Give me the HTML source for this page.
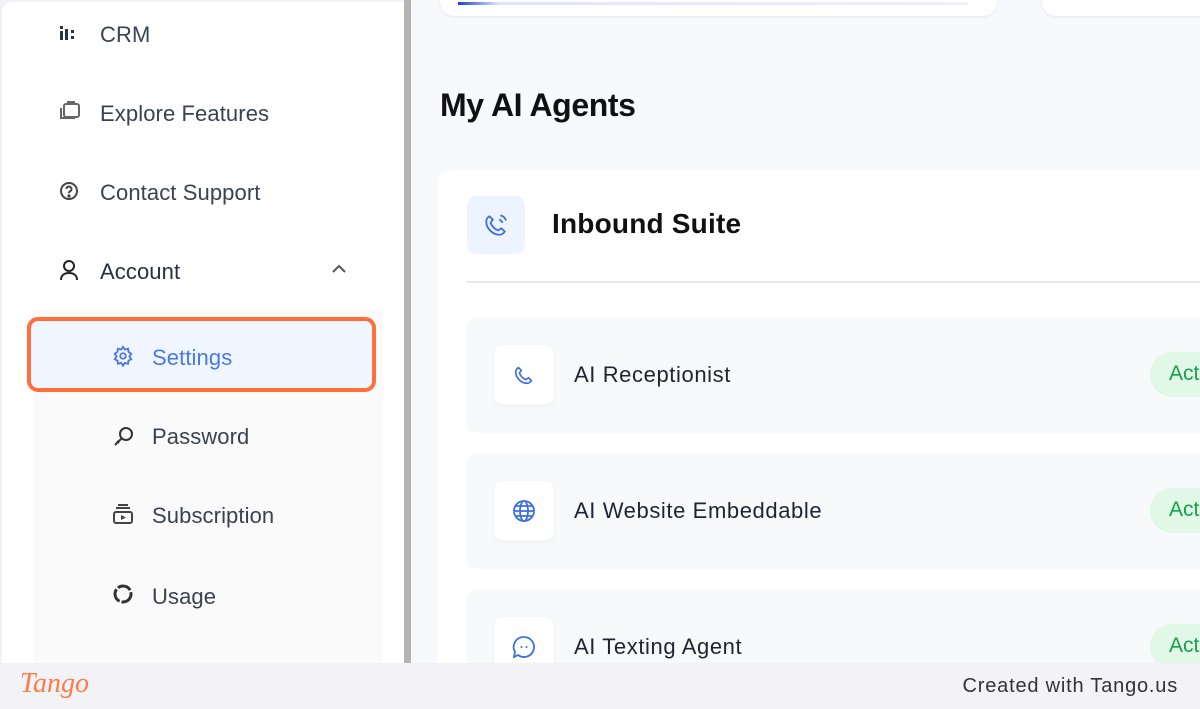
<!DOCTYPE html>
<html><head><meta charset="utf-8">
<style>
*{margin:0;padding:0;box-sizing:border-box}
body{width:1200px;height:709px;overflow:hidden;background:#f2f2f6;font-family:"Liberation Sans",Arial,sans-serif;position:relative}
.side{position:absolute;left:2px;top:2px;width:402px;height:661px;background:#fff;border-top-left-radius:10px}
.scroll{position:absolute;left:404px;top:0;width:7px;height:663px;background:#b4b4b4}
.main{position:absolute;left:411px;top:0;width:789px;height:663px;background:#f7f9fc;overflow:hidden}
.item{position:absolute;left:100px;font-size:22px;color:#3a4250;letter-spacing:0.1px}
.ic{position:absolute;left:58px}
.sub{position:absolute;left:33px;top:310px;width:350px;height:353px;background:#fafafa}
.hl{position:absolute;left:27px;top:317px;width:349px;height:75px;border:4px solid #ff6f3c;border-radius:11px;background:#eff6ff}
.sitem{position:absolute;left:152px;font-size:22px;color:#3a4250;letter-spacing:0.1px}
.sic{position:absolute;left:112px}
.footer{position:absolute;left:0;top:663px;width:1200px;height:46px;background:#f3f2f7}
.card{position:absolute;background:#fff;border-radius:14px}
.row{position:absolute;left:55px;width:760px;height:116px;background:#f8f9fb;border-radius:12px}
.ib{position:absolute;left:28px;top:28px;width:60px;height:60px;background:#fff;border-radius:10px;box-shadow:0 1px 3px rgba(0,0,0,.06)}
.rt{position:absolute;left:108px;top:45px;font-size:22px;color:#1e2430;letter-spacing:0.6px}
.badge{position:absolute;left:684px;top:35px;width:80px;height:45px;background:#e0f8e5;border-radius:23px;color:#16a34a;font-size:21px;padding:10px 0 0 19px}
</style></head><body>
<div class="side">
</div>
<div class="item" style="top:22px">CRM</div>
<svg class="ic" style="top:26px" width="22" height="14" viewBox="0 0 22 14"><g fill="#2a3140"><rect x="2" y="0" width="3" height="3"/><rect x="2" y="5" width="3" height="9"/><rect x="7" y="3" width="3" height="11"/><rect x="13" y="4" width="3" height="3"/><rect x="13" y="10" width="3" height="3"/></g></svg>
<div class="item" style="top:101px">Explore Features</div>
<svg class="ic" style="top:100px" width="24" height="22" viewBox="0 0 24 22"><g fill="none" stroke="#666" stroke-width="2"><rect x="6" y="4" width="15" height="13" rx="2"/><path d="M3 8v10h14"/><path d="M10 4V2h6v2"/></g></svg>
<div class="item" style="top:180px">Contact Support</div>
<svg class="ic" style="top:181px" width="22" height="22" viewBox="0 0 22 22"><g fill="none" stroke="#444" stroke-width="2"><circle cx="11" cy="10" r="8"/><path d="M8.5 8a2.5 2.5 0 1 1 3.5 2.3c-1 .5-1 1-1 2"/><circle cx="11" cy="15" r=".6" fill="#444"/></g></svg>
<div class="item" style="top:259px;color:#2a303b">Account</div>
<svg class="ic" style="top:259px" width="22" height="22" viewBox="0 0 22 22"><g fill="none" stroke="#222" stroke-width="2"><circle cx="11" cy="7" r="5"/><path d="M3 21c0-5 3.5-7 8-7s8 2 8 7"/></g></svg>
<svg style="position:absolute;left:331px;top:264px" width="16" height="10" viewBox="0 0 16 10"><path d="M2 8l6-6 6 6" fill="none" stroke="#555" stroke-width="2"/></svg>
<div class="sub"></div>
<div class="hl"></div>
<svg class="sic" style="top:345px" width="22" height="22" viewBox="0 0 24 24"><g fill="none" stroke="#4a78e6" stroke-width="2"><circle cx="12" cy="12" r="3"/><path d="M12 2l2 3 3.5-1 .5 3.5 3 2-2 3 2 3-3 1.5-.5 3.5-3.5-1-2 3-2-3-3.5 1-.5-3.5-3-1.5 2-3-2-3 3-2 .5-3.5 3.5 1z"/></g></svg>
<div class="sitem" style="top:345px;color:#4a78e6">Settings</div>
<svg class="sic" style="top:424px" width="24" height="24" viewBox="0 0 24 24"><g fill="none" stroke="#333" stroke-width="2"><circle cx="14" cy="10" r="6"/><path d="M10 14l-7 7M5 17l2 2"/></g></svg>
<div class="sitem" style="top:424px">Password</div>
<svg class="sic" style="top:503px" width="22" height="22" viewBox="0 0 22 22"><g fill="none" stroke="#444" stroke-width="2"><rect x="2" y="9" width="18" height="11" rx="2"/><path d="M4 5h14M6 2h10"/></g><path d="M9 12l5 2.5-5 2.5z" fill="#444"/></svg>
<div class="sitem" style="top:503px">Subscription</div>
<svg class="sic" style="top:583px" width="22" height="22" viewBox="0 0 22 22"><circle cx="11" cy="11" r="8" fill="none" stroke="#333" stroke-width="3" stroke-dasharray="14 2"/></svg>
<div class="sitem" style="top:584px">Usage</div>
<div class="scroll"></div>
<div class="main">
  <div class="card" style="left:29px;top:-20px;width:557px;height:36px;box-shadow:0 1px 3px rgba(0,0,0,.08)"><div style="position:absolute;left:18px;top:22px;width:510px;height:3px;background:linear-gradient(90deg,#1d3fe0 0,#dfe5ff 8%,#eef0ff)"></div></div>
  <div class="card" style="left:631px;top:-20px;width:200px;height:36px;box-shadow:0 1px 3px rgba(0,0,0,.08)"></div>
  <div style="position:absolute;left:29px;top:87px;font-size:32px;font-weight:bold;color:#111;letter-spacing:-0.4px">My AI Agents</div>
  <div class="card" style="left:27px;top:170px;width:800px;height:520px">
    <div style="position:absolute;left:29px;top:26px;width:58px;height:58px;background:#eef4ff;border-radius:10px"></div>
    <svg style="position:absolute;left:45px;top:42px" width="26" height="26" viewBox="0 0 24 24"><path d="M16 3c3 1 5 3 5 5M15 7c1.5.5 2.5 1.5 3 3M6 4c-2 1-3 3-3 5 0 6 6 12 12 12 2 0 4-1 5-3l-3-3-3 2c-3-1-6-4-7-7l2-3z" fill="none" stroke="#3b6fe0" stroke-width="1.7"/></svg>
    <div style="position:absolute;left:114px;top:38px;font-size:28px;font-weight:bold;color:#111;letter-spacing:0.2px">Inbound Suite</div>
    <div style="position:absolute;left:28px;top:111px;width:780px;height:2px;background:#e8e9ec"></div>
    <div class="row" style="left:28px;top:147px">
      <div class="ib"></div>
      <svg style="position:absolute;left:47px;top:47px" width="22" height="22" viewBox="0 0 24 24"><path d="M6 4c-2 1-3 3-3 5 0 6 6 12 12 12 2 0 4-1 5-3l-3-3-3 2c-3-1-6-4-7-7l2-3z" fill="none" stroke="#3b6fe0" stroke-width="1.8"/></svg>
      <div class="rt">AI Receptionist</div><div class="badge">Act</div>
    </div>
    <div class="row" style="left:28px;top:283px">
      <div class="ib"></div>
      <svg style="position:absolute;left:46px;top:46px" width="24" height="24" viewBox="0 0 24 24"><g fill="none" stroke="#3b6fe0" stroke-width="1.8"><circle cx="12" cy="12" r="10"/><ellipse cx="12" cy="12" rx="4" ry="10"/><path d="M2 12h20M4 7h16M4 17h16"/></g></svg>
      <div class="rt">AI Website Embeddable</div><div class="badge">Act</div>
    </div>
    <div class="row" style="left:28px;top:419px">
      <div class="ib"></div>
      <svg style="position:absolute;left:46px;top:46px" width="24" height="24" viewBox="0 0 24 24"><g fill="none" stroke="#3b6fe0" stroke-width="1.8"><path d="M12 2a10 10 0 1 1-6 18l-4 2 1-5A10 10 0 0 1 12 2z"/></g><circle cx="9.5" cy="12" r="1" fill="#3b6fe0"/><circle cx="14.5" cy="12" r="1" fill="#3b6fe0"/></svg>
      <div class="rt">AI Texting Agent</div><div class="badge">Act</div>
    </div>
  </div>
</div>
<div class="footer">
  <div style="position:absolute;left:20px;top:5px;font-family:'Liberation Serif',serif;font-style:italic;font-size:28px;color:#ff7a45">Tango</div>
  <div style="position:absolute;right:22px;top:12px;font-size:20px;color:#333;letter-spacing:0.8px">Created with Tango.us</div>
</div>
</body></html>
